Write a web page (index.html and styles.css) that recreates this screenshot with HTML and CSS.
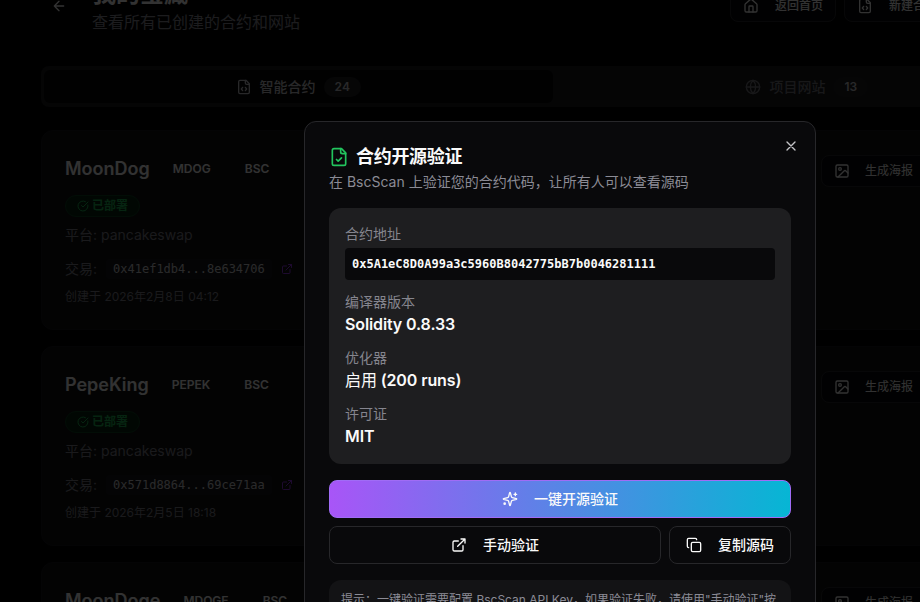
FILE: index.html
```html
<!DOCTYPE html>
<html lang="zh-CN">

<head>
    <meta charset="UTF-8" />
    <meta name="viewport" content="width=device-width, initial-scale=1.0" />
    <title>合约开源验证</title>
    <link rel="stylesheet" href="styles.css">
</head>

<body>
    <!-- shared icons -->
    <svg class="sprite" xmlns="http://www.w3.org/2000/svg">
        <symbol id="arrow-left" viewBox="0 0 24 24"><path d="m12 19-7-7 7-7M19 12H5" /></symbol>
        <symbol id="home" viewBox="0 0 24 24"><path d="M15 21v-8a1 1 0 0 0-1-1h-4a1 1 0 0 0-1 1v8" /><path d="M3 10a2 2 0 0 1 .709-1.528l7-6a2 2 0 0 1 2.582 0l7 6A2 2 0 0 1 21 10v9a2 2 0 0 1-2 2H5a2 2 0 0 1-2-2z" /></symbol>
        <symbol id="file-code" viewBox="0 0 24 24"><path d="M10 12.5 8 15l2 2.500M14 12.500l2 2.500-2 2.500" /><path d="M14 2v4a2 2 0 0 0 2 2h4" /><path d="M15 2H6a2 2 0 0 0-2 2v16a2 2 0 0 0 2 2h12a2 2 0 0 0 2-2V7z" /></symbol>
        <symbol id="file-check" viewBox="0 0 24 24"><path d="M15 2H6a2 2 0 0 0-2 2v16a2 2 0 0 0 2 2h12a2 2 0 0 0 2-2V7z" /><path d="M14 2v4a2 2 0 0 0 2 2h4" /><path d="m9 15 2 2 4-4" /></symbol>
        <symbol id="globe" viewBox="0 0 24 24"><circle cx="12" cy="12" r="10" /><path d="M12 2a14.500 14.500 0 0 0 0 20 14.500 14.500 0 0 0 0-20M2 12h20" /></symbol>
        <symbol id="check" viewBox="0 0 24 24"><path d="M21.801 10A10 10 0 1 1 17 3.335" /><path d="m9 11 3 3L22 4" /></symbol>
        <symbol id="external" viewBox="0 0 24 24"><path d="M15 3h6v6M10 14 21 3M18 13v6a2 2 0 0 1-2 2H5a2 2 0 0 1-2-2V8a2 2 0 0 1 2-2h6" /></symbol>
        <symbol id="image" viewBox="0 0 24 24"><rect x="3" y="3" width="18" height="18" rx="2" /><circle cx="9" cy="9" r="2" /><path d="m21 15-3.086-3.086a2 2 0 0 0-2.828 0L6 21" /></symbol>
        <symbol id="close" viewBox="0 0 24 24"><path d="M18 6 6 18M6 6l12 12" /></symbol>
        <symbol id="copy" viewBox="0 0 24 24"><rect x="8" y="8" width="14" height="14" rx="2" /><path d="M4 16c-1.100 0-2-.9-2-2V4c0-1.100.9-2 2-2h10c1.100 0 2 .9 2 2" /></symbol>
        <symbol id="sparkles" viewBox="0 0 24 24"><path d="M9.937 15.500A2 2 0 0 0 8.500 14.063l-6.135-1.582a.5.5 0 0 1 0-.962L8.500 9.936A2 2 0 0 0 9.937 8.500l1.582-6.135a.5.5 0 0 1 .963 0L14.063 8.500A2 2 0 0 0 15.500 9.937l6.135 1.581a.5.5 0 0 1 0 .964L15.500 14.063a2 2 0 0 0-1.437 1.437l-1.582 6.135a.5.5 0 0 1-.963 0z" /><path d="M20 3v4M22 5h-4" /><circle cx="4" cy="19" r="1" /></symbol>
    </svg>

    <div class="page">
        <header class="header">
            <svg class="icon"><use href="#arrow-left" /></svg>
            <div class="header-text">
                <h1>我的宝藏</h1>
                <p>查看所有已创建的合约和网站</p>
            </div>
            <div class="header-actions">
                <button class="btn"><svg class="icon"><use href="#home" /></svg>返回首页</button>
                <button class="btn"><svg class="icon"><use href="#file-code" /></svg>新建合约</button>
            </div>
        </header>

        <nav class="tabs">
            <div class="tab active"><svg class="icon"><use href="#file-code" /></svg>智能合约<span class="count">24</span></div>
            <div class="tab"><svg class="icon"><use href="#globe" /></svg>项目网站<span class="count">13</span></div>
        </nav>

        <section class="card">
            <div class="card-info">
                <div class="card-title"><h3>MoonDog</h3><span class="tag">MDOG</span><span class="tag">BSC</span></div>
                <span class="status"><svg class="icon"><use href="#check" /></svg>已部署</span>
                <p class="platform">平台: pancakeswap</p>
                <p class="tx">交易: <code>0x41ef1db4...8e634706</code><svg class="icon link"><use href="#external" /></svg></p>
                <p class="date">创建于 2026年2月8日 04:12</p>
            </div>
            <button class="btn"><svg class="icon"><use href="#image" /></svg>生成海报</button>
        </section>

        <section class="card">
            <div class="card-info">
                <div class="card-title"><h3>PepeKing</h3><span class="tag">PEPEK</span><span class="tag">BSC</span></div>
                <span class="status"><svg class="icon"><use href="#check" /></svg>已部署</span>
                <p class="platform">平台: pancakeswap</p>
                <p class="tx">交易: <code>0x571d8864...69ce71aa</code><svg class="icon link"><use href="#external" /></svg></p>
                <p class="date">创建于 2026年2月5日 18:18</p>
            </div>
            <button class="btn"><svg class="icon"><use href="#image" /></svg>生成海报</button>
        </section>

        <section class="card">
            <div class="card-info">
                <div class="card-title"><h3>MoonDoge</h3><span class="tag">MDOGE</span><span class="tag">BSC</span></div>
            </div>
            <button class="btn"><svg class="icon"><use href="#image" /></svg>生成海报</button>
        </section>
    </div>

    <div class="overlay">
        <div class="dialog">
            <svg class="icon close"><use href="#close" /></svg>
            <h2><svg class="icon"><use href="#file-check" /></svg>合约开源验证</h2>
            <p class="desc">在 BscScan 上验证您的合约代码，让所有人可以查看源码</p>

            <div class="details">
                <div class="field">
                    <label>合约地址</label>
                    <code>0x5A1eC8D0A99a3c5960B8042775bB7b0046281111</code>
                </div>
                <div class="field"><label>编译器版本</label><strong>Solidity 0.8.33</strong></div>
                <div class="field"><label>优化器</label><strong><span class="regular">启用</span> (200 runs)</strong></div>
                <div class="field"><label>许可证</label><strong>MIT</strong></div>
            </div>

            <div class="actions">
                <button class="btn primary"><svg class="icon"><use href="#sparkles" /></svg>一键开源验证</button>
                <button class="btn"><svg class="icon"><use href="#external" /></svg>手动验证</button>
                <button class="btn"><svg class="icon"><use href="#copy" /></svg>复制源码</button>
            </div>

            <div class="hint">提示：一键验证需要配置 BscScan API Key，如果验证失败，请使用"手动验证"按钮</div>
        </div>
    </div>
</body>

</html>
```
FILE: styles.css
```css
:root {
    --bg: #09090b;
    --card: #111113;
    --border: #27272a;
    --text: #fafafa;
    --muted: #8b8b95;
    --mono: 'DejaVu Sans Mono', 'Noto Sans CJK SC', monospace;
}

* {
    box-sizing: border-box;
    margin: 0;
    padding: 0;
}

body {
    height: 602px;
    overflow: hidden;
    background: #030304;
    color: var(--text);
    font-family: Inter, 'Noto Sans CJK SC', sans-serif;
    font-size: 14px;
    line-height: 20px;
}

.sprite {
    display: none;
}

.icon {
    width: 16px;
    height: 16px;
    flex: none;
    fill: none;
    stroke: currentColor;
    stroke-width: 2;
    stroke-linecap: round;
    stroke-linejoin: round;
}

.btn {
    display: flex;
    align-items: center;
    justify-content: center;
    gap: 16px;
    height: 38px;
    padding: 0 16px;
    border: 1px solid var(--border);
    border-radius: 8px;
    background: var(--bg);
    color: var(--text);
    font: 500 14px/20px Inter, 'Noto Sans CJK SC', sans-serif;
    white-space: nowrap;
}

/* page behind the dialog */
.page {
    width: 1023px;
    margin: -14px 0 0 41px;
}

.header {
    display: flex;
    height: 50px;
    padding-left: 10px;
}

.header > .icon {
    margin-top: 12px;
}

.header-text {
    flex: 1;
    margin-left: 25px;
}

.header h1 {
    margin-top: -8px;
    font-size: 24px;
    line-height: 32px;
}

.header p {
    margin-top: 0;
    color: var(--muted);
    font-size: 16px;
    line-height: 24px;
}

.header-actions {
    display: flex;
    gap: 8px;
    width: 334px;
}

.header .btn {
    height: 32px;
    margin-top: 4px;
    padding: 0 12px;
    font-size: 12px;
}

.tabs {
    display: flex;
    height: 41px;
    margin: 30px 0 23px;
    padding: 4px 3px;
    border-radius: 8px;
    background: #1a1a1d;
}

.tab {
    display: flex;
    flex: 1;
    align-items: center;
    justify-content: center;
    gap: 8px;
    border-radius: 6px;
    color: #77777f;
    font-weight: 500;
}

.tab.active {
    background: #060607;
    color: #c8c8cc;
}

.count {
    padding: 0 11px;
    border-radius: 10px;
    background: #1e1e21;
    color: #c8c8cc;
    font-size: 12px;
    font-weight: 600;
}

.card {
    display: flex;
    align-items: flex-start;
    justify-content: space-between;
    height: 200px;
    margin-bottom: 16px;
    padding: 25px 0 0 23px;
    border: 1px solid #17171a;
    border-radius: 12px;
    background: var(--card);
}

.card > .btn {
    justify-content: flex-start;
    gap: 15px;
    width: 110px;
    height: 32px;
    margin: -1px 132px 0 0;
    padding: 0 12px;
    font-size: 12px;
    font-weight: 400;
}

.card-title {
    display: flex;
    align-items: center;
    height: 26px;
}

.card-title h3 {
    font-size: 18px;
    font-weight: 600;
}

.tag {
    margin-left: 12px;
    padding: 0 11px;
    font-size: 12px;
    font-weight: 600;
}

.status {
    display: flex;
    align-items: center;
    gap: 3px;
    width: 75px;
    height: 22px;
    margin-top: 13px;
    padding-left: 11px;
    border: 1px solid #0d4020;
    border-radius: 11px;
    background: #06260f;
    color: #1fb455;
    font-size: 12px;
    font-weight: 600;
}

.status .icon {
    width: 12px;
    height: 12px;
}

.platform,
.tx,
.date {
    color: #80808a;
}

.platform {
    margin-top: 8px;
}

.tx {
    display: flex;
    align-items: center;
    height: 24px;
    margin-top: 12px;
}

.tx code {
    margin: 0 9px;
    padding: 0 7px;
    border-radius: 4px;
    background: #18181b;
    color: #d0d0d4;
    font-family: var(--mono);
    font-size: 12px;
}

.link {
    width: 12px;
    height: 12px;
    color: #9333ea;
}

.date {
    margin-top: 6px;
    font-size: 12px;
}

/* dialog */
.overlay {
    position: fixed;
    inset: 0;
    overflow: hidden;
    padding: 121px 0 0 304px;
    background: rgba(0, 0, 0, 0.8);
}

.dialog {
    position: relative;
    width: 512px;
    height: 560px;
    padding: 24px;
    border: 1px solid var(--border);
    border-radius: 12px;
    background: var(--bg);
}

.close {
    position: absolute;
    top: 16px;
    right: 16px;
    color: #c4c4c7;
}

.dialog h2 {
    display: flex;
    align-items: center;
    gap: 7px;
    height: 20px;
    padding-top: 1px;
    font-size: 18px;
    letter-spacing: -0.3px;
}

.dialog h2 .icon {
    width: 20px;
    height: 20px;
    color: #22c55e;
}

.desc {
    margin-top: 6px;
    color: var(--muted);
}

.details {
    height: 256px;
    margin-top: 16px;
    padding: 16px;
    border-radius: 12px;
    background: #1e1e20;
}

.field {
    margin-bottom: 12px;
}

.field label,
.field strong {
    display: block;
}

.field label {
    color: #85858e;
}

.field strong {
    font-size: 16px;
    font-weight: 600;
    letter-spacing: -0.12px;
    line-height: 24px;
}

.field .regular {
    font-weight: 400;
}

.field code {
    display: block;
    height: 32px;
    margin-top: 4px;
    padding: 0 7px;
    border-radius: 4px;
    background: var(--bg);
    font: bold 12px/32px var(--mono);
}

.actions {
    display: grid;
    grid-template-columns: 332px 122px;
    gap: 8px;
    margin-top: 16px;
}

.primary {
    grid-column: span 2;
    border-color: #a06cf5;
    background: linear-gradient(90deg, #a855f7, #06b6d4);
}

.hint {
    height: 60px;
    margin-top: 16px;
    padding: 12px 12px;
    border-radius: 12px;
    background: #131315;
    color: var(--muted);
    font-size: 12px;
    line-height: 16px;
}
```
